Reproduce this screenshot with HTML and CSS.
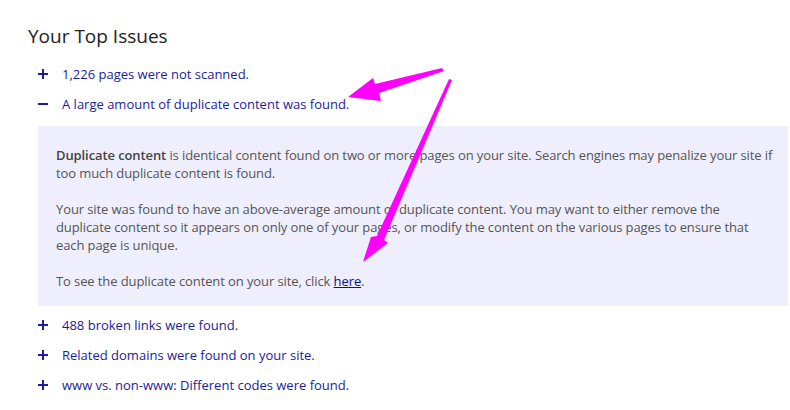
FILE: index.html
```html
<!DOCTYPE html>
<html lang="en">
<head>
    <meta charset="UTF-8">
    <meta name="viewport" content="width=device-width, initial-scale=1.0">
    <title>Your Top Issues</title>
    <link rel="stylesheet" href="styles.css">
</head>
<body>

    <div class="report">
        <h2 class="report-title">Your Top Issues</h2>

        <ul class="issues">
            <li class="issue">
                <span class="toggle plus"></span>
                <a href="#">1,226 pages were not scanned.</a>
            </li>
            <li class="issue open">
                <span class="toggle minus"></span>
                <a href="#">A large amount of duplicate content was found.</a>
            </li>
            <li class="issue-detail">
                <p><span class="term">Duplicate content</span> is identical content found on two or more pages on your site. Search engines may penalize your site if too much duplicate content is found.</p>
                <p>Your site was found to have an above-average amount of duplicate content. You may want to either remove the<br>duplicate content so it appears on only one of your pages, or modify the content on the various pages to ensure that<br>each page is unique.</p>
                <p>To see the duplicate content on your site, click <a class="here" href="#">here</a>.</p>
            </li>
            <li class="issue">
                <span class="toggle plus"></span>
                <a href="#">488 broken links were found.</a>
            </li>
            <li class="issue">
                <span class="toggle plus"></span>
                <a href="#">Related domains were found on your site.</a>
            </li>
            <li class="issue">
                <span class="toggle plus"></span>
                <a href="#">www vs. non-www: Different codes were found.</a>
            </li>
        </ul>
    </div>

    <!-- annotation arrows drawn over the screenshot -->
    <svg class="annotations" width="790" height="410" viewBox="0 0 790 410">
        <polygon points="348,97 373,78 375,84 442,68 444,71 379,93 381,101" fill="#ff00ff"/>
        <polygon points="363,262 371,237 377,236 449,79 452,80 384,240 388,243" fill="#ff00ff"/>
    </svg>

</body>
</html>
```

FILE: styles.css
```css
body {
    margin: 0;
    font-family: "Open Sans", "Noto Sans", sans-serif;
    font-size: 13px;
    color: #555;
    background: #fff;
}

.report {
    padding: 24px 2px 0 28px;
}

.report-title {
    margin: 0 0 11px;
    font-size: 19px;
    font-weight: normal;
    line-height: 24px;
    color: #222;
}

/* --- issue list --- */
.issues {
    list-style: none;
    margin: 0;
    padding: 0;
}

.issue {
    display: flex;
    align-items: center;
    height: 30px;
    padding-left: 10px;
}

.issue a {
    color: #1c1c9c;
    text-decoration: none;
}

.toggle {
    position: relative;
    width: 24px;
    height: 10px;
    flex-shrink: 0;
}

.toggle::before,
.toggle::after {
    content: "";
    position: absolute;
    background: #1c1c9c;
}

/* horizontal stroke */
.toggle::before {
    left: 0;
    top: 4px;
    width: 10px;
    height: 2px;
}

/* vertical stroke, plus only */
.toggle.plus::after {
    left: 4px;
    top: 0;
    width: 2px;
    height: 10px;
}

.toggle.minus::after {
    display: none;
}

/* --- expanded detail panel --- */
.issue-detail {
    margin: 7px 0 4px 10px;
    padding: 20px 4px 16px 18px;
    background: #efeefc;
    line-height: 18px;
    letter-spacing: -0.1px;
}

.issue-detail p {
    margin: 0 0 18px;
}

.issue-detail p:last-child {
    margin-bottom: 0;
}

.issue-detail .term {
    font-weight: 600;
    color: #444;
}

.issue-detail .here {
    color: #10108a;
    text-decoration: underline;
}

.annotations {
    position: absolute;
    top: 0;
    left: 0;
    pointer-events: none;
}
```
